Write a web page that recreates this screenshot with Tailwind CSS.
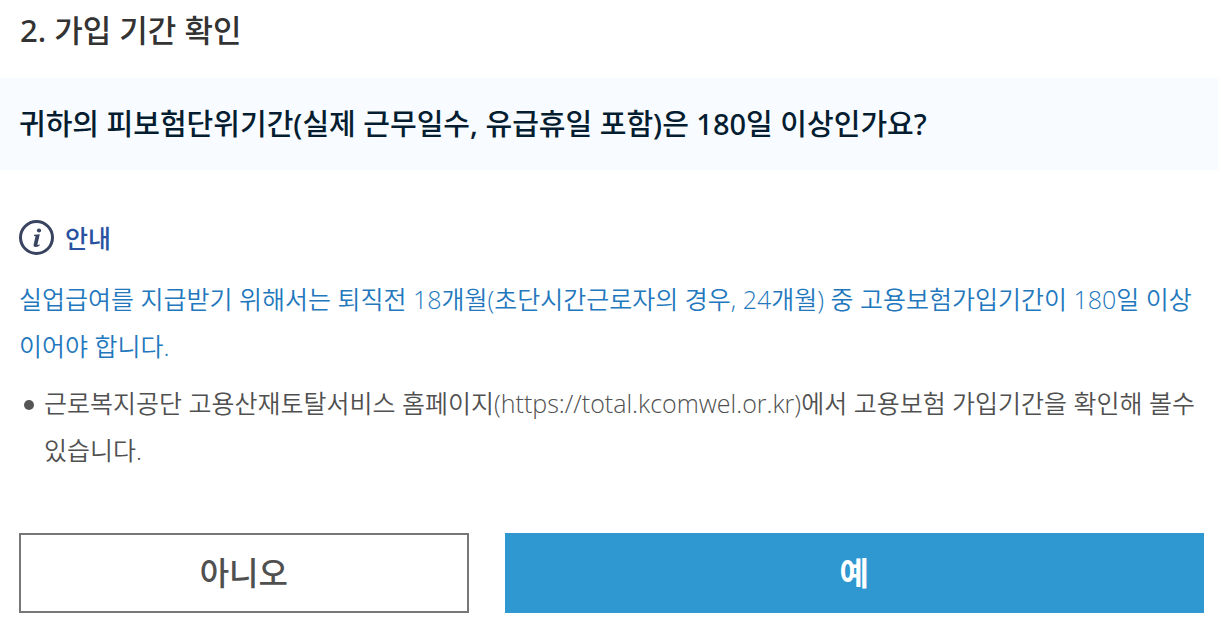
<!DOCTYPE html>
<html lang="ko">
<head>
<meta charset="utf-8">
<meta name="viewport" content="width=device-width, initial-scale=1">
<title>가입 기간 확인</title>
<script src="https://cdn.jsdelivr.net/npm/@tailwindcss/browser@4"></script>
</head>
<body class="bg-white font-['Open_Sans','Noto_Sans_CJK_KR',sans-serif] text-[#505050]">
<main>
  <h1 class="px-5 pt-[7px] pb-[25px] font-['Noto_Sans','Noto_Sans_CJK_KR',sans-serif] text-[31px] leading-[46px] font-medium text-[#333333]">2. 가입 기간 확인</h1>
  <h2 class="bg-[#f8fbff] px-[19px] py-[22px] font-['Noto_Sans','Noto_Sans_CJK_KR',sans-serif] text-[29px] leading-[48px] font-medium text-[#051d30]">귀하의 피보험단위기간(실제 근무일수, 유급휴일 포함)은 180일 이상인가요?</h2>
  <section class="pt-12 pr-3 pl-[19px]">
    <h3 class="flex items-center gap-2.5 text-[25px] leading-10 font-medium text-[#2a52a0]">
      <svg class="size-9 shrink-0" viewBox="0 0 36 36" fill="none" aria-hidden="true">
        <circle cx="17.5" cy="17.5" r="16" stroke="#38435f" stroke-width="3"/>
        <circle cx="20" cy="10.5" r="2.1" fill="#38435f"/>
        <path d="M15.2 14.8 L20.8 14.3 L18.4 24.5 Q18.3 25.4 20.7 24.2 L20.4 25.7 Q18 27.2 16 27 Q14.2 26.8 14.6 24.8 L16.6 16.3 L14.9 16.1 Z" fill="#38435f"/>
      </svg>
      안내
    </h3>
    <p class="pt-[18px] text-[25px] leading-[47px] font-[350] text-[#2277bd]">실업급여를 지급받기 위해서는 퇴직전 18개월(초단시간근로자의 경우, 24개월) 중 고용보험가입기간이 180일 이상이어야 합니다.</p>
    <ul class="pt-2.5 text-[25px] leading-[47px] font-[350]">
      <li class="flex gap-2.5 pl-[5px]">
        <span class="mt-[20px] size-2.5 shrink-0 rounded-full bg-[#555555]"></span>
        <span>근로복지공단 고용산재토탈서비스 홈페이지(https://total.kcomwel.or.kr)에서 고용보험 가입기간을 확인해 볼수 있습니다.</span>
      </li>
    </ul>
  </section>
  <div class="grid grid-cols-[9fr_14fr] gap-9 pt-[59px] pr-3.5 pb-6 pl-[19px] text-[32px] leading-[48px]">
    <button type="button" class="h-20 border-2 border-[#777777] bg-white font-medium">아니오</button>
    <button type="button" class="h-20 bg-[#2f98d0] font-bold text-white">예</button>
  </div>
</main>
</body>
</html>
